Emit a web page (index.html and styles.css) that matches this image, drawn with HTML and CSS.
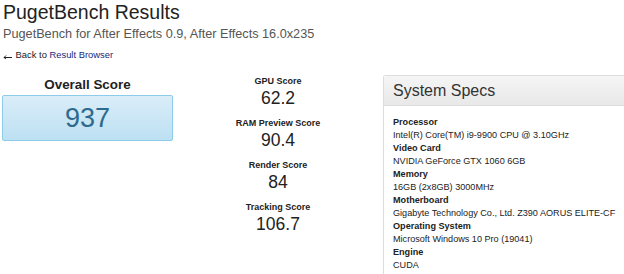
FILE: index.html
```html
<!DOCTYPE html>
<html>
<head>
    <title>PugetBench Results</title>
    <link rel="stylesheet" href="styles.css">
</head>
<body>
    <div class="page">
        <h1 class="title">PugetBench Results</h1>
        <h2 class="subtitle">PugetBench for After Effects 0.9, After Effects 16.0x235</h2>
        <p class="back">
            <svg class="arrow" width="9" height="5" viewBox="0 0 9 5"><path d="M1 3.5 H9 M3 1.5 L1 3.5 L3 5" fill="none" stroke="#222" stroke-width="1"/></svg>
            Back to <a href="#">Result Browser</a>
        </p>

        <div class="row">
            <div class="overall">
                <div class="overall-label">Overall Score</div>
                <div class="overall-box">937</div>
            </div>

            <div class="scores">
                <div class="score">
                    <div class="score-label">GPU Score</div>
                    <div class="score-value">62.2</div>
                </div>
                <div class="score">
                    <div class="score-label">RAM Preview Score</div>
                    <div class="score-value">90.4</div>
                </div>
                <div class="score">
                    <div class="score-label">Render Score</div>
                    <div class="score-value">84</div>
                </div>
                <div class="score">
                    <div class="score-label">Tracking Score</div>
                    <div class="score-value">106.7</div>
                </div>
            </div>

            <div class="panel">
                <div class="panel-heading">System Specs</div>
                <div class="panel-body">
                    <div class="spec-name">Processor</div>
                    <div class="spec-value">Intel(R) Core(TM) i9-9900 CPU @ 3.10GHz</div>
                    <div class="spec-name">Video Card</div>
                    <div class="spec-value">NVIDIA GeForce GTX 1060 6GB</div>
                    <div class="spec-name">Memory</div>
                    <div class="spec-value">16GB (2x8GB) 3000MHz</div>
                    <div class="spec-name">Motherboard</div>
                    <div class="spec-value">Gigabyte Technology Co., Ltd. Z390 AORUS ELITE-CF</div>
                    <div class="spec-name">Operating System</div>
                    <div class="spec-value">Microsoft Windows 10 Pro (19041)</div>
                    <div class="spec-name">Engine</div>
                    <div class="spec-value">CUDA</div>
                </div>
            </div>
        </div>
    </div>
</body>
</html>
```

FILE: styles.css
```css
body {
    margin: 0;
    background-color: #fff;
    font-family: "Liberation Sans", Arial, sans-serif;
    color: #222;
    overflow: hidden;
}

.page {
    width: 622px;
    padding: 0 0 0 2px;
}

.title {
    margin: 0 0 0 1px;
    font-size: 19.5px;
    font-weight: normal;
    line-height: 24px;
}

.subtitle {
    margin: 2px 0 0 1px;
    font-size: 12.7px;
    font-weight: normal;
    line-height: 16px;
    color: #555;
}

.back {
    margin: 7px 0 0 0;
    font-size: 9.4px;
    line-height: 12px;
    color: #222;
}

.arrow {
    display: inline-block;
    margin: 0 1px 0 1px;
    vertical-align: -1px;
}

.back a {
    color: #1a1f7a;
    text-decoration: none;
}

.row {
    display: flex;
    margin-top: 14px;
}

.overall {
    width: 171px;
    margin-top: 2px;
}

.overall-label {
    text-align: center;
    font-size: 13.4px;
    font-weight: bold;
    line-height: 16px;
}

.overall-box {
    margin-top: 2px;
    height: 44px;
    line-height: 44px;
    text-align: center;
    font-size: 27px;
    color: #2d6a8e;
    background: linear-gradient(#daedf8, #bde0f3);
    border: 1px solid #8ccbea;
    border-radius: 2px;
}

.scores {
    width: 190px;
    margin-left: 10px;
    text-align: center;
}

.score {
    margin-bottom: 9px;
}

.score-label {
    font-size: 9px;
    font-weight: bold;
    line-height: 13px;
}

.score-value {
    font-size: 17.5px;
    line-height: 20px;
}

.panel {
    flex: 1;
    margin-left: 10px;
    border: 1px solid #ddd;
    border-right: none;
    border-radius: 3px 0 0 3px;
    align-self: flex-start;
}

.panel-heading {
    height: 29px;
    line-height: 29px;
    padding-left: 9px;
    font-size: 16px;
    color: #333;
    background: linear-gradient(#f5f5f5, #e8e8e8);
    border-bottom: 1px solid #ddd;
}

.panel-body {
    padding: 10px 0 10px 9px;
    font-size: 9.1px;
    line-height: 13px;
}

.spec-name {
    font-weight: bold;
}
```
